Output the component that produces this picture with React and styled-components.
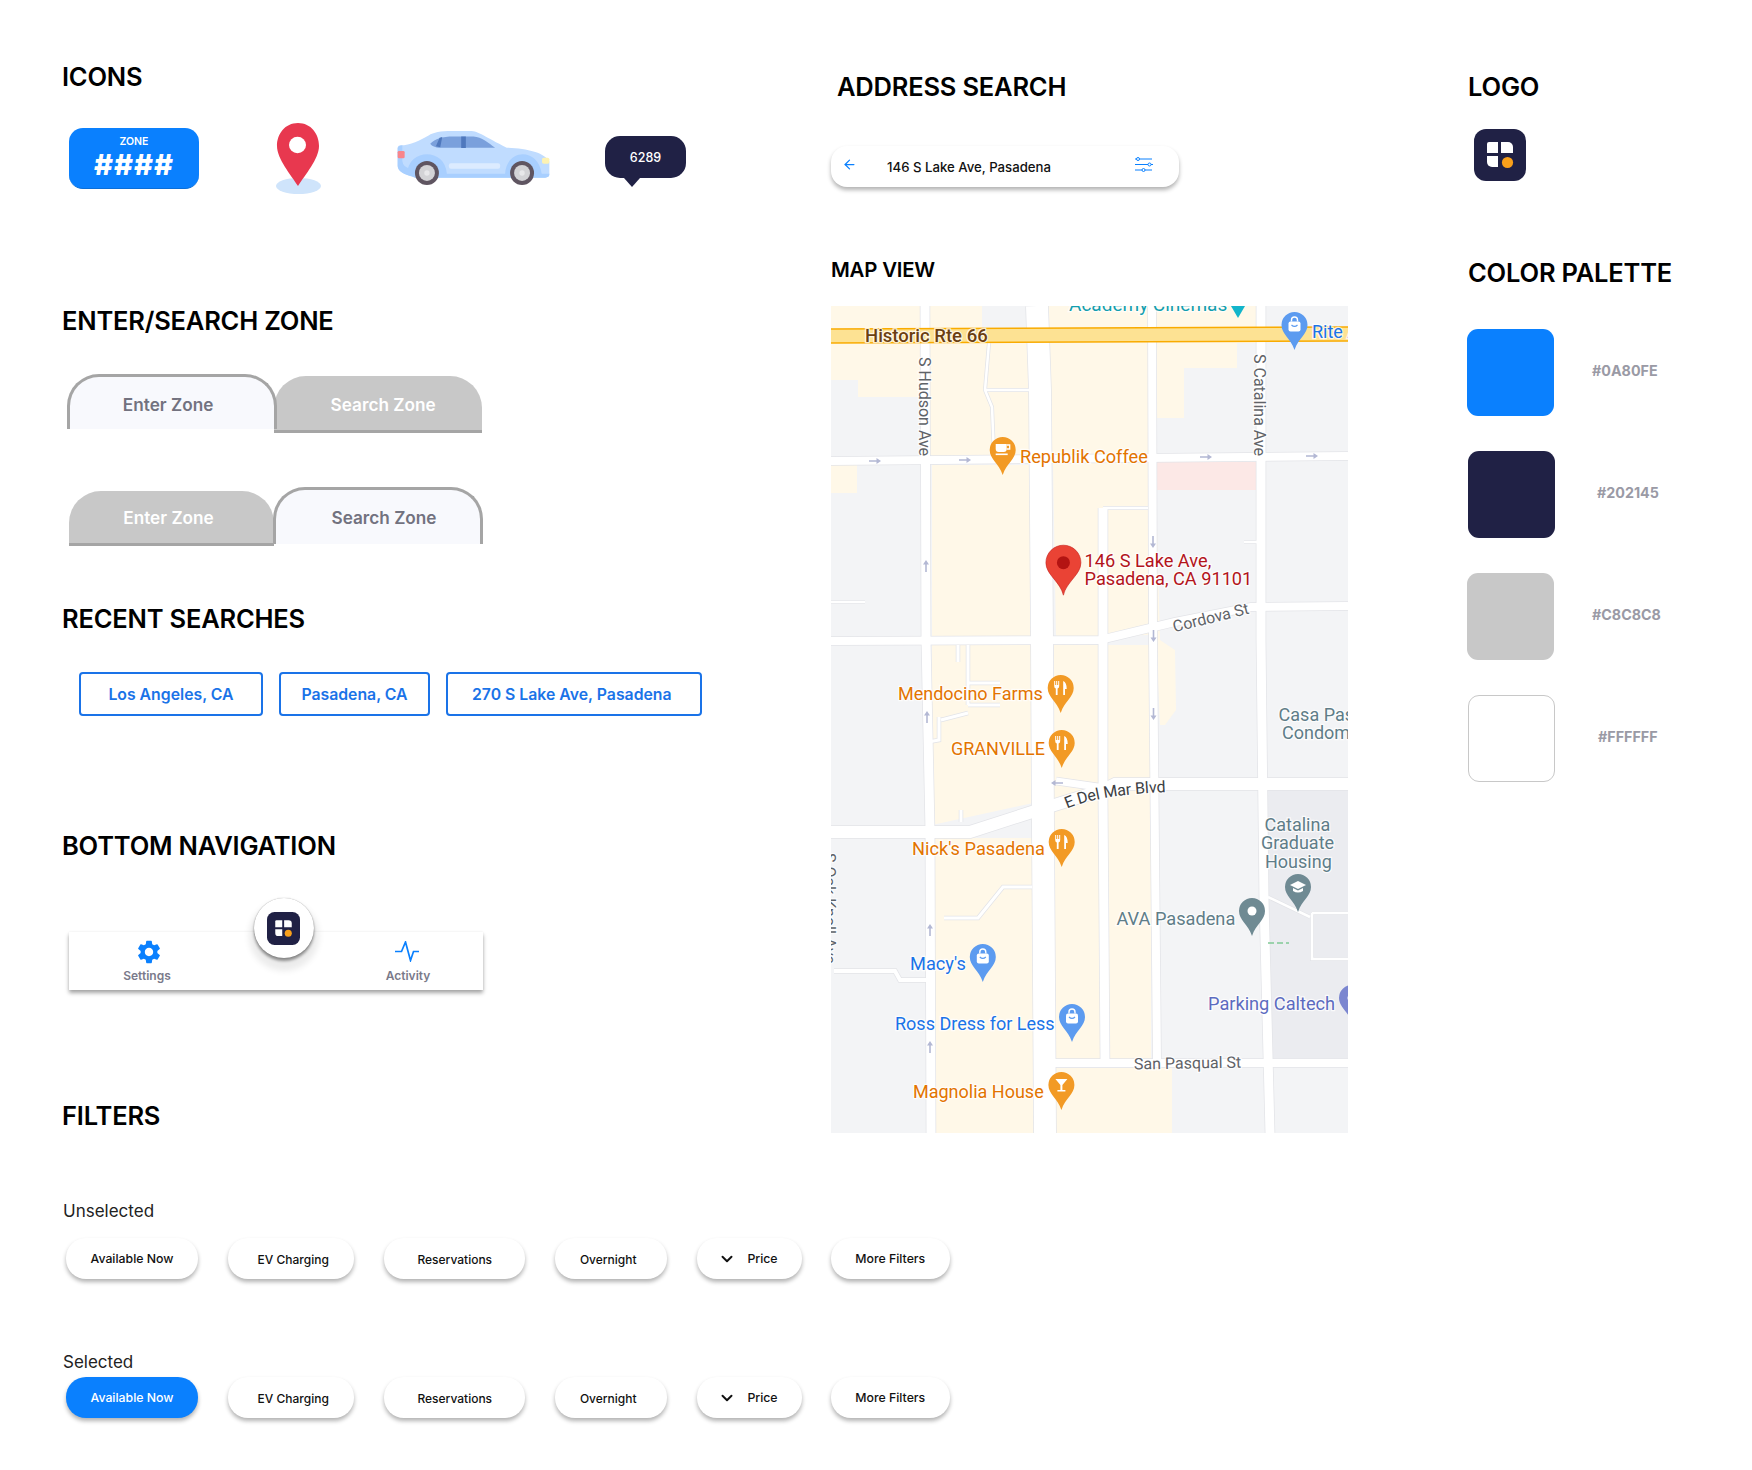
import React from 'react';
import styled, { createGlobalStyle } from 'styled-components';
import { MdSettings } from 'react-icons/md';
import { ArrowLeft, ChevronDown } from 'lucide-react';

const GlobalStyle = createGlobalStyle`
  html, body { margin: 0; padding: 0; background: #fff; }
  body { font-family: Inter, "Liberation Sans", sans-serif; }
`;

const Page = styled.div`
  width: 1752px;
  height: 1470px;
  display: grid;
  grid-template-columns: 769px 637px 1fr;
  padding-left: 62px;
  box-sizing: border-box;
  overflow: hidden;
`;

const Column = styled.div`
  padding-top: ${({ $top }) => $top}px;
  display: flex;
  flex-direction: column;
  align-items: flex-start;
`;

const Heading = styled.h2`
  margin: ${({ $mt = 0 }) => $mt}px 0 0 ${({ $ml = 0 }) => $ml}px;
  font-size: ${({ $size = 25.5 }) => $size}px;
  line-height: 30px;
  font-weight: 600;
  letter-spacing: -0.2px;
  color: #000;
  white-space: nowrap;
`;

/* icons */
const IconRow = styled.div`
  display: flex;
  align-items: center;
  margin: 31px 0 0 7px;
  height: 71px;
`;

const ZoneBadge = styled.div`
  width: 130px;
  height: 61px;
  box-sizing: border-box;
  background: #0a80fe;
  border-bottom: 1px solid #0a6ed8;
  border-radius: 14px;
  color: #fff;
  display: flex;
  flex-direction: column;
  align-items: center;
  padding-top: 7px;
  .zone { font-size: 10.5px; line-height: 13px; font-weight: 600; }
  .hash { font-size: 29px; line-height: 33px; font-weight: 800; letter-spacing: 1px; }
`;

const IconSlot = styled.div`
  margin-left: ${({ $gap }) => $gap}px;
  display: flex;
`;

const Bubble = styled.div`
  position: relative;
  top: 3px;
  width: 81px;
  height: 42px;
  margin-bottom: 9px;
  background: #202145;
  border-radius: 15px;
  color: #fff;
  font-size: 12.5px;
  font-weight: 500;
  display: flex;
  align-items: center;
  justify-content: center;
  &::after {
    content: '';
    position: absolute;
    left: 19px;
    bottom: -9px;
    border-left: 8px solid transparent;
    border-right: 8px solid transparent;
    border-top: 9px solid #202145;
  }
`;

/* tabs */
const TabRow = styled.div`
  display: flex;
  align-items: flex-start;
  margin: ${({ $mt }) => $mt}px 0 0 ${({ $ml }) => $ml}px;
`;

const Tab = styled.div`
  box-sizing: border-box;
  width: ${({ $w }) => $w}px;
  height: ${({ $h }) => $h}px;
  margin-top: ${({ $top = 0 }) => $top}px;
  margin-left: ${({ $ml = 0 }) => $ml}px;
  padding: ${({ $pt = 0 }) => $pt}px ${({ $shift = 0 }) => ($shift < 0 ? -2 * $shift : 0)}px 0
    ${({ $shift = 0 }) => ($shift > 0 ? 2 * $shift : 0)}px;
  border-radius: 32px 32px 0 0;
  display: flex;
  align-items: center;
  justify-content: center;
  font-size: 17.2px;
  font-weight: 600;
  ${({ $active }) =>
    $active
      ? `background:#f8f9fd;color:#72727f;border:3px solid #a5a5a5;border-bottom:none;position:relative;z-index:1;`
      : `background:#c8c8c8;color:#fff;border-bottom:3px solid #a5a5a5;`}
`;

/* recent */
const RecentRow = styled.div`
  display: flex;
  gap: 16px;
  margin: 38.5px 0 0 17px;
`;

const RecentChip = styled.div`
  box-sizing: border-box;
  width: ${({ $w }) => $w}px;
  height: 44px;
  padding-right: ${({ $pr = 0 }) => $pr}px;
  border: 2px solid #1a73e8;
  border-radius: 4px;
  color: #1a73e8;
  font-size: 15.8px;
  font-weight: 600;
  display: flex;
  align-items: center;
  justify-content: center;
`;

/* bottom nav */
const Nav = styled.div`
  position: relative;
  box-sizing: border-box;
  width: 414px;
  height: 58px;
  margin: 71px 0 0 7px;
  padding: 8px 0 0;
  background: #fff;
  box-shadow: 0 3px 4px rgba(0, 0, 0, 0.35), 0 0 2px rgba(0, 0, 0, 0.06);
  display: grid;
  grid-template-columns: 156px 1fr 150px;
`;

const NavItem = styled.div`
  display: flex;
  flex-direction: column;
  align-items: center;
  gap: 5px;
  font-size: 12px;
  font-weight: 600;
  line-height: 16px;
  color: #7a7a8a;
  ${({ $col }) => `grid-column:${$col};`}
`;

const NavIcon = styled.div`
  height: 23px;
  display: flex;
  align-items: center;
  justify-content: center;
  margin-left: ${({ $ml = 0 }) => $ml}px;
  color: #0a80fe;
`;

const Fab = styled.div`
  position: absolute;
  left: 184.5px;
  top: -34px;
  width: 60px;
  height: 60px;
  border-radius: 50%;
  background: #fff;
  display: flex;
  align-items: center;
  justify-content: center;
  box-shadow: 0 0 1px rgba(0, 0, 0, 0.4), 0 3px 3px rgba(0, 0, 0, 0.4), 0 8px 6px 5px rgba(0, 0, 0, 0.08);
`;

/* filters */
const SubLabel = styled.div`
  margin: ${({ $mt }) => $mt}px 0 0 1px;
  font-size: 17px;
  line-height: 24px;
  color: #222;
`;

const FilterRow = styled.div`
  display: flex;
  gap: 29.5px;
  margin: ${({ $mt }) => $mt}px 0 0 4px;
`;

const FilterChip = styled.div`
  box-sizing: border-box;
  width: ${({ $w }) => $w}px;
  height: 41px;
  border-radius: 20px;
  padding: ${({ $low }) => ($low ? 2 : 0)}px ${({ $pr = 0 }) => $pr}px 0 ${({ $pl = 0 }) => $pl}px;
  background: ${({ $on }) => ($on ? '#0a80fe' : '#fff')};
  color: ${({ $on }) => ($on ? '#fff' : '#111')};
  box-shadow: 0 3px 4px rgba(0, 0, 0, 0.3);
  font-size: ${({ $low }) => ($low ? 12 : 12.3)}px;
  font-weight: 500;
  display: flex;
  align-items: center;
  justify-content: center;
  gap: 11px;
`;

/* address search */
const SearchBar = styled.div`
  box-sizing: border-box;
  width: 348px;
  height: 41px;
  margin: 44px 0 0;
  padding: 0 25px 4px 11px;
  border-radius: 16px;
  background: #fff;
  box-shadow: 0 3px 4px rgba(0, 0, 0, 0.3);
  display: flex;
  align-items: center;
  color: #111;
  font-size: 13.2px;
  font-weight: 500;
  .text { margin: 5px 0 0 30px; flex: 1; }
  svg { flex-shrink: 0; }
`;

/* map */
const MapFrame = styled.svg`
  display: block;
  margin-top: 21px;
  width: 517px;
  height: 827px;
`;

const MapLabel = styled.text`
  font-family: Roboto, sans-serif;
  font-size: ${({ $size = 18 }) => $size}px;
  font-weight: ${({ $weight = 400 }) => $weight};
  fill: ${({ $color }) => $color};
  stroke: #fff;
  stroke-width: 2.5px;
  stroke-opacity: 0.75;
  paint-order: stroke;
  dominant-baseline: central;
`;

/* palette */
const LogoBox = styled.div`
  margin: 27px 0 0 6px;
  display: flex;
`;

const PaletteList = styled.div`
  margin-top: 41px;
  display: flex;
  flex-direction: column;
  gap: 35px;
`;

const PaletteRow = styled.div`
  display: flex;
  align-items: center;
`;

const Swatch = styled.div`
  box-sizing: border-box;
  width: 87px;
  height: 87px;
  margin-left: ${({ $ml }) => $ml}px;
  border-radius: 11px;
  background: ${({ $color }) => $color};
  ${({ $outline }) => $outline && 'border: 1px solid #c8c8c8;'}
`;

const SwatchCode = styled.span`
  margin: 0 0 4px ${({ $ml }) => $ml}px;
  font-size: 14.3px;
  font-weight: 700;
  color: #9a9aa5;
`;

const Logo = ({ size = 52 }) => (
  <svg width={size} height={size} viewBox="0 0 52 52">
    <rect width="52" height="52" rx="12" fill="#202145" />
    <path d="M13 15a2 2 0 0 1 2-2h9v11H13z" fill="#fff" />
    <path d="M27 13h7a5 5 0 0 1 5 5v6H27z" fill="#fff" />
    <path d="M13 27h11v11h-6a5 5 0 0 1-5-5z" fill="#fff" />
    <circle cx="33.5" cy="33.5" r="5.6" fill="#f9a01b" />
  </svg>
);

const LocationPin = () => (
  <svg width="45" height="71" viewBox="0 0 45 71">
    <ellipse cx="22.5" cy="63" rx="22.5" ry="8" fill="#cfe4fb" />
    <path d="M22 0C9 0 1 11 1 23c0 13 14 29 21 40 7-11 21-27 21-40C43 11 35 0 22 0z" fill="#e8384f" />
    <ellipse cx="21.5" cy="22" rx="8.5" ry="8.3" fill="#fff" />
  </svg>
);

const Wheel = ({ x }) => (
  <g>
    <circle cx={x} cy="146" r="36" fill="#5f5561" />
    <circle cx={x} cy="146" r="24" fill="#d3d3d6" />
    <circle cx={x} cy="146" r="8" fill="#e8e8ea" />
  </g>
);

const Car = () => (
  <svg width="153" height="55" viewBox="20 20 460 165">
    <path d="M22 70Q22 64 30 63C60 62 90 48 115 33C130 24 150 20 185 20H240C265 20 285 38 350 70C410 72 465 85 478 112V150Q478 160 465 160H75C45 152 22 140 22 125z" fill="#c0dcff" />
    <path d="M22 70Q25 64 36 63V110Q38 130 62 133V155C40 150 22 140 22 125z" fill="#a8cfff" />
    <path d="M50 148C55 70 165 70 170 148H345C350 70 445 70 455 148H478V150Q478 160 465 160H75L50 150z" fill="#a8cfff" />
    <path d="M66 150C70 98 150 98 156 150zM360 150C365 98 435 98 442 150z" fill="#a8cfff" />
    <path d="M120 58C135 42 155 36 190 36H250C275 38 295 55 315 70H145C130 68 122 62 120 58z" fill="#7aa0dc" />
    <path d="M137 66L148 40L156 38L150 69zM213 36H227V71H213z" fill="#4f78bd" />
    <rect x="176" y="117" width="154" height="16" rx="6" fill="#dcebff" />
    <rect x="22" y="80" width="21" height="22" rx="4" fill="#f8858b" />
    <rect x="456" y="100" width="22" height="18" rx="5" fill="#fdf2b3" />
    <Wheel x={110} />
    <Wheel x={396} />
  </svg>
);

const SlidersIcon = () => (
  <svg width="20" height="15" viewBox="0 0 20 15" fill="none" stroke="#0a80fe" strokeWidth="1">
    <path d="M5.5 2H18M1 2h1.5M1 7.5h13M17 7.5h2M1 13h7M11 13h7" />
    <circle cx="4" cy="2" r="1.5" />
    <circle cx="15.5" cy="7.5" r="1.5" />
    <circle cx="9.5" cy="13" r="1.5" />
  </svg>
);

const ActivityIcon = () => (
  <svg width="24" height="21" viewBox="0 0 24 21" fill="none" stroke="#0a80fe" strokeWidth="1.7">
    <path d="M0 10.5h6.5L10.5 1l5 18.5 3-9H24" />
  </svg>
);

/* map drawing data, coordinates are the ones of the page */
const beige = [
  '831,306 982,306 982,343 831,343',
  '1044,306 1256,306 1256,343 1044,343',
  '831,343 1030,343 1030,457 932,457 932,455 922,455 922,397 858,397 858,380 831,380',
  '1044,343 1150,343 1150,457 1044,457',
  '1156,343 1237,343 1237,368 1184,368 1184,418 1156,418',
  '831,465 857,465 857,493 831,493',
  '932,465 1030,465 1032,637 932,637',
  '1053,463 1150,463 1150,635 1056,637',
  '1156,490 1160,640 1175,650 1176,710 1165,725 1160,725 1156,640',
  '932,645 1033,645 1033,803 932,825',
  '1054,645 1151,645 1151,1059 1056,1059 1054,800',
  '934,838 1033,838 1036,1133 936,1133',
  '1056,1068 1172,1068 1172,1133 1056,1133',
];

const roads = [
  { w: 9, d: 'M925 306L926 640L930 830L931 1133' },
  { w: 22, d: 'M1037 306L1040 390L1042 640L1043 830L1045 1133' },
  { w: 9, d: 'M1103 508L1103 800L1105 1063' },
  { w: 8, d: 'M1152 306L1153 640L1157 1063' },
  { w: 9, d: 'M1261 306L1261 640L1264 900L1270 1133' },
  { w: 8, d: 'M831 461L1348 456' },
  { w: 8, d: 'M831 641L1100 640L1175 622L1251 607L1348 606' },
  { w: 12, d: 'M831 832L970 832L1032 812L1103 790L1115 784L1348 784' },
  { w: 7, d: 'M1056 781L1105 788' },
  { w: 8, d: 'M1053 1063L1348 1063' },
  { w: 4, d: 'M834 971L895 971L900 980L928 980' },
  { w: 2.5, d: 'M989 343L985 390L992 407L994 455M985 390H1030' },
  { w: 2.5, d: 'M1103 508H1148M1244 542H1257M831 602H865' },
  { w: 3, d: 'M958 645V662M968 645V705M968 683H1000M968 705H1000M941 720L968 713M939 717V740L928 742' },
  { w: 3, d: 'M961 810V822M1032 887H1003L978 918H944' },
  { w: 2.5, d: 'M1268 897L1310 917M1312 913H1348M1312 913V959H1348' },
];

const arrows = [
  [875, 461, 0], [965, 460, 0], [1206, 457, 0], [1312, 456, 0],
  [926, 566, -90], [927, 717, -90], [930, 930, -90], [930, 1047, -90],
  [1153, 542, 90], [1153.5, 636, 90], [1153.5, 714, 90], [1057, 783, 180],
];

const ORANGE_TEXT = '#e37400';
const PIN_ORANGE = '#f29a25';
const BLUE = '#1a73e8';
const PIN_BLUE = '#5c9bf0';
const SLATE = '#5f7d88';
const PIN_SLATE = '#6f8a93';

const pins = [
  { x: 1294.5, y: 325, c: PIN_BLUE, g: 'bag' },
  { x: 1002.7, y: 450, c: PIN_ORANGE, g: 'cup' },
  { x: 1060.7, y: 688, c: PIN_ORANGE, g: 'food' },
  { x: 1061.7, y: 743, c: PIN_ORANGE, g: 'food' },
  { x: 1061.7, y: 842, c: PIN_ORANGE, g: 'food' },
  { x: 1298, y: 887, c: PIN_SLATE, g: 'cap' },
  { x: 1252, y: 911, c: PIN_SLATE, g: 'dot' },
  { x: 982.8, y: 957, c: PIN_BLUE, g: 'bag' },
  { x: 1352, y: 998, c: '#7b86d0', g: 'dot' },
  { x: 1072, y: 1017, c: PIN_BLUE, g: 'bag' },
  { x: 1061.4, y: 1085, c: PIN_ORANGE, g: 'glass' },
];

const labels = [
  { x: 1069, y: 304, t: 'Academy Cinemas', c: '#129eaf', s: 19 },
  { x: 865, y: 336, t: 'Historic Rte 66', c: '#6b3f10', s: 18.5, w: 500 },
  { x: 1312, y: 331, t: 'Rite Aid', c: BLUE, s: 18 },
  { x: 1020, y: 456, t: 'Republik Coffee', c: ORANGE_TEXT, s: 18.2 },
  { x: 1084.5, y: 560, t: '146 S Lake Ave,', c: '#b3141b', s: 18.2 },
  { x: 1084.5, y: 578.5, t: 'Pasadena, CA 91101', c: '#b3141b', s: 18.2 },
  { x: 898, y: 693, t: 'Mendocino Farms', c: ORANGE_TEXT, s: 18 },
  { x: 1278.6, y: 714, t: 'Casa Pasadena', c: SLATE, s: 18 },
  { x: 1282, y: 732.5, t: 'Condominiums', c: SLATE, s: 18 },
  { x: 951, y: 748, t: 'GRANVILLE', c: ORANGE_TEXT, s: 18 },
  { x: 912, y: 848, t: "Nick's Pasadena", c: ORANGE_TEXT, s: 18.2 },
  { x: 1264.5, y: 824, t: 'Catalina', c: SLATE, s: 18 },
  { x: 1261, y: 842.5, t: 'Graduate', c: SLATE, s: 18 },
  { x: 1265, y: 861, t: 'Housing', c: SLATE, s: 18 },
  { x: 1116.5, y: 918, t: 'AVA Pasadena', c: SLATE, s: 18.2 },
  { x: 910, y: 963, t: "Macy's", c: BLUE, s: 18.2 },
  { x: 1208, y: 1003, t: 'Parking Caltech', c: '#5c6bc0', s: 18.2 },
  { x: 895, y: 1023, t: 'Ross Dress for Less', c: BLUE, s: 18 },
  { x: 913, y: 1091, t: 'Magnolia House', c: ORANGE_TEXT, s: 18 },
];

const streets = [
  { x: 924, y: 357, r: 90, t: 'S Hudson Ave', c: '#5f6368' },
  { x: 1259, y: 354, r: 90, t: 'S Catalina Ave', c: '#5f6368' },
  { x: 1173, y: 627, r: -14, t: 'Cordova St', c: '#5f6368' },
  { x: 1134, y: 1064, r: -1, t: 'San Pasqual St', c: '#5f6368' },
  { x: 829, y: 853, r: 90, t: 'S Oak Knoll Ave', c: '#5f6368' },
];

const PinGlyph = ({ kind, color }) => {
  if (kind === 'bag')
    return (
      <g>
        <rect x="-6" y="-3.5" width="12" height="10" rx="2" fill="#fff" />
        <path d="M-3-3.5V-5a3 3 0 0 1 6 0v1.5" fill="none" stroke="#fff" strokeWidth="1.4" />
        <path d="M-3 0q3 3 6 0" fill="none" stroke={color} strokeWidth="1.2" />
      </g>
    );
  if (kind === 'cup')
    return (
      <g fill="#fff">
        <path d="M-7-6H4v5q0 3-3 3h-5q-3 0-3-3z" />
        <path d="M4-5h3v4H4" fill="none" stroke="#fff" strokeWidth="1.3" />
        <rect x="-7" y="3.5" width="12" height="1.6" />
      </g>
    );
  if (kind === 'food')
    return (
      <g fill="#fff">
        <path d="M-6.5-7h1v4h1v-4h1v4h1v-4h1v5q0 2-1.6 2.5V7h-1.8V.5Q-6.500 0-6.500-2z" />
        <path d="M2.500-7q3.500 1.500 3.500 8H4.300V7H2.500z" />
      </g>
    );
  if (kind === 'cap')
    return (
      <g fill="#fff">
        <path d="M-8-2L0-6l8 4-8 4z" />
        <path d="M-5 1v3q5 3 10 0V1L0 3.500z" />
      </g>
    );
  if (kind === 'glass') return <path d="M-6-6H6L1 0v5h3v1.500h-8V5h3V0z" fill="#fff" />;
  return <circle r="4.500" fill="#fff" />;
};

const MapPin = ({ x, y, c, g }) => (
  <g transform={`translate(${x} ${y})`}>
    <path d="M-13 0A13 13 0 1 1 13 0C13 9 4 13 0 25C-4 13-13 9-13 0z" fill={c} />
    <PinGlyph kind={g} color={c} />
  </g>
);

const MapArrow = ({ x, y, r }) => (
  <path
    transform={`translate(${x} ${y}) rotate(${r})`}
    d="M-6-.8H1.500V-3L6 0 1.500 3V.8H-6z"
    fill="#b3b8d4"
  />
);

const MapView = () => (
  <MapFrame viewBox="831 306 517 827">
    <rect x="831" y="306" width="517" height="827" fill="#f3f4f6" />
    <rect x="1268" y="790" width="80" height="268" fill="#ebecf0" />
    {beige.map((p) => (
      <polygon key={p} points={p} fill="#fff8e8" />
    ))}
    <rect x="1156" y="462" width="100" height="28" fill="#fce8e6" />
    {roads.map((r) => (
      <path key={r.d} d={r.d} fill="none" stroke="#e3e4e8" strokeWidth={r.w + 1.5} />
    ))}
    {roads.map((r) => (
      <path key={r.d} d={r.d} fill="none" stroke="#fff" strokeWidth={r.w} />
    ))}
    <path d="M831 336L1348 334" stroke="#f9ab00" strokeWidth="15.5" />
    <path d="M831 336L1348 334" stroke="#fde293" strokeWidth="12.5" />
    <path d="M1268 943H1289" stroke="#81c995" strokeWidth="1.500" strokeDasharray="6 3" />
    {arrows.map(([x, y, r]) => (
      <MapArrow key={`${x}-${y}`} x={x} y={y} r={r} />
    ))}
    <path d="M1231 306H1245L1238 318z" fill="#12b5cb" />
    {pins.map((p) => (
      <MapPin key={`${p.x}-${p.y}`} {...p} />
    ))}
    <g transform="translate(1063.4 562.700)">
      <path d="M-17.500 0A17.500 17.500 0 1 1 17.500 0C17.500 12 3 19 0 32.500C-3 19-17.500 12-17.500 0z" fill="#ea4335" stroke="#c5221f" strokeWidth="0.6" />
      <circle r="6.500" fill="#b31412" />
    </g>
    {labels.map((l) => (
      <MapLabel key={l.t} x={l.x} y={l.y} $color={l.c} $size={l.s} $weight={l.w}>
        {l.t}
      </MapLabel>
    ))}
    {streets.map((l) => (
      <MapLabel key={l.t} transform={`translate(${l.x} ${l.y}) rotate(${l.r})`} $color={l.c} $size={16}>
        {l.t}
      </MapLabel>
    ))}
    <path id="del-mar" d="M1065 803Q1100 788 1172 786" fill="none" />
    <MapLabel $color="#3c4043" $size={16}>
      <textPath href="#del-mar">E Del Mar Blvd</textPath>
    </MapLabel>
  </MapFrame>
);

const filterChips = [
  { w: 132, t: 'Available Now' },
  { w: 126.5, t: 'EV Charging', low: true, pl: 5 },
  { w: 141.5, t: 'Reservations', low: true, pl: 1 },
  { w: 112.5, t: 'Overnight', low: true, pr: 5 },
  { w: 105, t: 'Price', chevron: true, pr: 2 },
  { w: 118.5, t: 'More Filters' },
];

const Filters = ({ selected, mt }) => (
  <FilterRow $mt={mt}>
    {filterChips.map((c, i) => (
      <FilterChip key={c.t} $w={c.w} $on={selected && i === 0} $low={c.low} $pl={c.pl} $pr={c.pr}>
        {c.chevron && <ChevronDown size={18} strokeWidth={2.6} color="#111" />}
        {c.t}
      </FilterChip>
    ))}
  </FilterRow>
);

const palette = [
  { color: '#0A80FE', ml: -1, codeMl: 38 },
  { color: '#202145', ml: 0, codeMl: 42 },
  { color: '#C8C8C8', ml: -1, codeMl: 38 },
  { color: '#FFFFFF', ml: 0, codeMl: 43, outline: true },
];

export default function App() {
  return (
    <Page>
      <GlobalStyle />
      <Column $top={62}>
        <Heading>ICONS</Heading>
        <IconRow>
          <ZoneBadge>
            <span className="zone">ZONE</span>
            <span className="hash">####</span>
          </ZoneBadge>
          <IconSlot $gap={77}><LocationPin /></IconSlot>
          <IconSlot $gap={76}><Car /></IconSlot>
          <IconSlot $gap={55}><Bubble>6289</Bubble></IconSlot>
        </IconRow>

        <Heading $mt={112}>ENTER/SEARCH ZONE</Heading>
        <TabRow $mt={38} $ml={4.6}>
          <Tab $active $w={210} $h={55} $pt={3} $shift={-3.5}>Enter Zone</Tab>
          <Tab $w={208} $h={57} $top={2} $ml={-2.5} $pt={3} $shift={5}>Search Zone</Tab>
        </TabRow>
        <TabRow $mt={54} $ml={7}>
          <Tab $w={205} $h={55} $top={4} $pt={1} $shift={-3}>Enter Zone</Tab>
          <Tab $active $w={210} $h={57} $ml={-1} $pt={1} $shift={6}>Search Zone</Tab>
        </TabRow>

        <Heading $mt={57.5}>RECENT SEARCHES</Heading>
        <RecentRow>
          <RecentChip $w={184}>Los Angeles, CA</RecentChip>
          <RecentChip $w={151}>Pasadena, CA</RecentChip>
          <RecentChip $w={255.6} $pr={4}>270 S Lake Ave, Pasadena</RecentChip>
        </RecentRow>

        <Heading $mt={115}>BOTTOM NAVIGATION</Heading>
        <Nav>
          <NavItem $col={1}>
            <NavIcon $ml={4}><MdSettings size={28} /></NavIcon>
            Settings
          </NavItem>
          <NavItem $col={3}>
            <NavIcon $ml={-2}><ActivityIcon /></NavIcon>
            Activity
          </NavItem>
          <Fab><Logo size={33} /></Fab>
        </Nav>

        <Heading $mt={110.5}>FILTERS</Heading>
        <SubLabel $mt={68}>Unselected</SubLabel>
        <Filters mt={15.5} />
        <SubLabel $mt={70.5}>Selected</SubLabel>
        <Filters mt={3.6} selected />
      </Column>

      <Column $top={72}>
        <Heading $ml={6}>ADDRESS SEARCH</Heading>
        <SearchBar>
          <ArrowLeft size={15} color="#0a80fe" strokeWidth={2} />
          <span className="text">146 S Lake Ave, Pasadena</span>
          <SlidersIcon />
        </SearchBar>
        <Heading $mt={68} $size={20.4}>MAP VIEW</Heading>
        <MapView />
      </Column>

      <Column $top={72}>
        <Heading>LOGO</Heading>
        <LogoBox><Logo /></LogoBox>
        <Heading $mt={77}>COLOR PALETTE</Heading>
        <PaletteList>
          {palette.map((p) => (
            <PaletteRow key={p.color}>
              <Swatch $color={p.color} $ml={p.ml} $outline={p.outline} />
              <SwatchCode $ml={p.codeMl}>{`#${p.color.slice(1)}`}</SwatchCode>
            </PaletteRow>
          ))}
        </PaletteList>
      </Column>
    </Page>
  );
}
